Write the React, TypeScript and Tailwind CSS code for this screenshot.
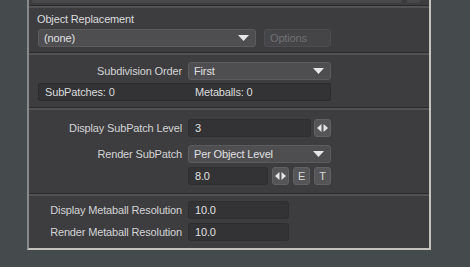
import React from "react";

const Tri = () => (
  <svg width="11" height="6" viewBox="0 0 11 6" className="block">
    <path d="M0 0 L11 0 L5.5 6 Z" fill="#e6e6e6" />
  </svg>
);

const LR = () => (
  <svg width="11" height="8" viewBox="0 0 11 8" className="block">
    <path d="M4.5 0 L4.5 8 L0 4 Z" fill="#e6e6e6" />
    <path d="M6.5 0 L6.5 8 L11 4 Z" fill="#e6e6e6" />
  </svg>
);

const Dropdown = ({ text, w }: { text: string; w: string }) => (
  <div
    className={`${w} h-[18px] flex items-center justify-between rounded-[3px] bg-[#4e4e50] border border-[#5c5c5e] pl-[5px] pr-[6px] text-[#e0e0e2]`}
  >
    <span>{text}</span>
    <Tri />
  </div>
);

const Field = ({ text, w }: { text: string; w: string }) => (
  <div
    className={`${w} h-[18px] flex items-center rounded-[3px] bg-[#333335] border border-[#2e2e30] pl-[6px] text-[#e0e0e2]`}
  >
    {text}
  </div>
);

const Btn = ({ children }: { children: React.ReactNode }) => (
  <div className="w-[17px] h-[18px] flex items-center justify-center rounded-[3px] bg-[#555557] border border-[#616163] text-[#d8d8d8]">
    {children}
  </div>
);

const Sep = ({ className = "" }: { className?: string }) => (
  <div className={`flex flex-col ${className}`}>
    <div className="h-[1px] bg-[#2a2a2b]" />
    <div className="h-[2px] bg-[#525254]" />
  </div>
);

const Label = ({ text }: { text: string }) => (
  <div className="w-[159px] shrink-0 whitespace-nowrap text-right text-[#d4d4d6] pr-[6px]">
    {text}
  </div>
);

export default function App() {
  return (
    <div
      className="w-[470px] h-[267px] bg-[#454a4d] overflow-hidden text-[11px] tracking-[-0.15px] leading-none"
      style={{ fontFamily: '"Liberation Sans", Arial, sans-serif' }}
    >
      <div className="ml-[27px] w-[404px] h-[250px] bg-[#3d3d3f] border-l-2 border-r-2 border-b-2 border-l-[#8a8a8a] border-r-[#c4c4bc] border-b-[#c4c4bc] flex flex-col">
        {/* top remnant */}
        <div className="flex h-[3px] pl-[3px] gap-[5px]">
          <div className="w-[370px] h-[3px] bg-[#49494b] rounded-b-[2px]" />
          <div className="w-[13px] h-[3px] bg-[#49494b] rounded-b-[2px]" />
        </div>
        <Sep className="mt-[2px]" />
        {/* Object replacement */}
        <div className="pl-[8px] pt-[6px] text-[#dcdcde] h-[18px]">Object Replacement</div>
        <div className="flex pl-[9px] mt-[3px] gap-[8px]">
          <Dropdown text="(none)" w="w-[218px]" />
          <div className="w-[67px] h-[18px] flex items-center rounded-[3px] bg-[#454547] border border-[#4e4e50] pl-[5px] text-[#707072]">
            Options
          </div>
        </div>
        <Sep className="mt-[5px]" />
        {/* Subdivision */}
        <div className="flex items-center mt-[7px]">
          <Label text="Subdivision Order" />
          <Dropdown text="First" w="w-[143px]" />
        </div>
        <div className="ml-[9px] mt-[3px] w-[293px] h-[18px] shrink-0 flex items-center bg-[#333335] border border-[#2b2b2d] rounded-[2px] text-[#dcdcde]">
          <span className="pl-[6px] w-[156px]">SubPatches: 0</span>
          <span>Metaballs: 0</span>
        </div>
        <Sep className="mt-[6px]" />
        {/* SubPatch */}
        <div className="flex items-center mt-[9px]">
          <Label text="Display SubPatch Level" />
          <div className="flex gap-[3px]">
            <Field text="3" w="w-[123px]" />
            <Btn>
              <LR />
            </Btn>
          </div>
        </div>
        <div className="flex items-center mt-[8px]">
          <Label text="Render SubPatch" />
          <Dropdown text="Per Object Level" w="w-[143px]" />
        </div>
        <div className="flex items-center mt-[4px]">
          <div className="w-[159px] shrink-0" />
          <div className="flex gap-[4px]">
            <Field text="8.0" w="w-[80px]" />
            <Btn>
              <LR />
            </Btn>
            <Btn>E</Btn>
            <Btn>T</Btn>
          </div>
        </div>
        <Sep className="mt-[8px]" />
        {/* Metaball */}
        <div className="flex items-center mt-[5px]">
          <Label text="Display Metaball Resolution" />
          <Field text="10.0" w="w-[101px]" />
        </div>
        <div className="flex items-center mt-[4px]">
          <Label text="Render Metaball Resolution" />
          <Field text="10.0" w="w-[101px]" />
        </div>
      </div>
    </div>
  );
}
